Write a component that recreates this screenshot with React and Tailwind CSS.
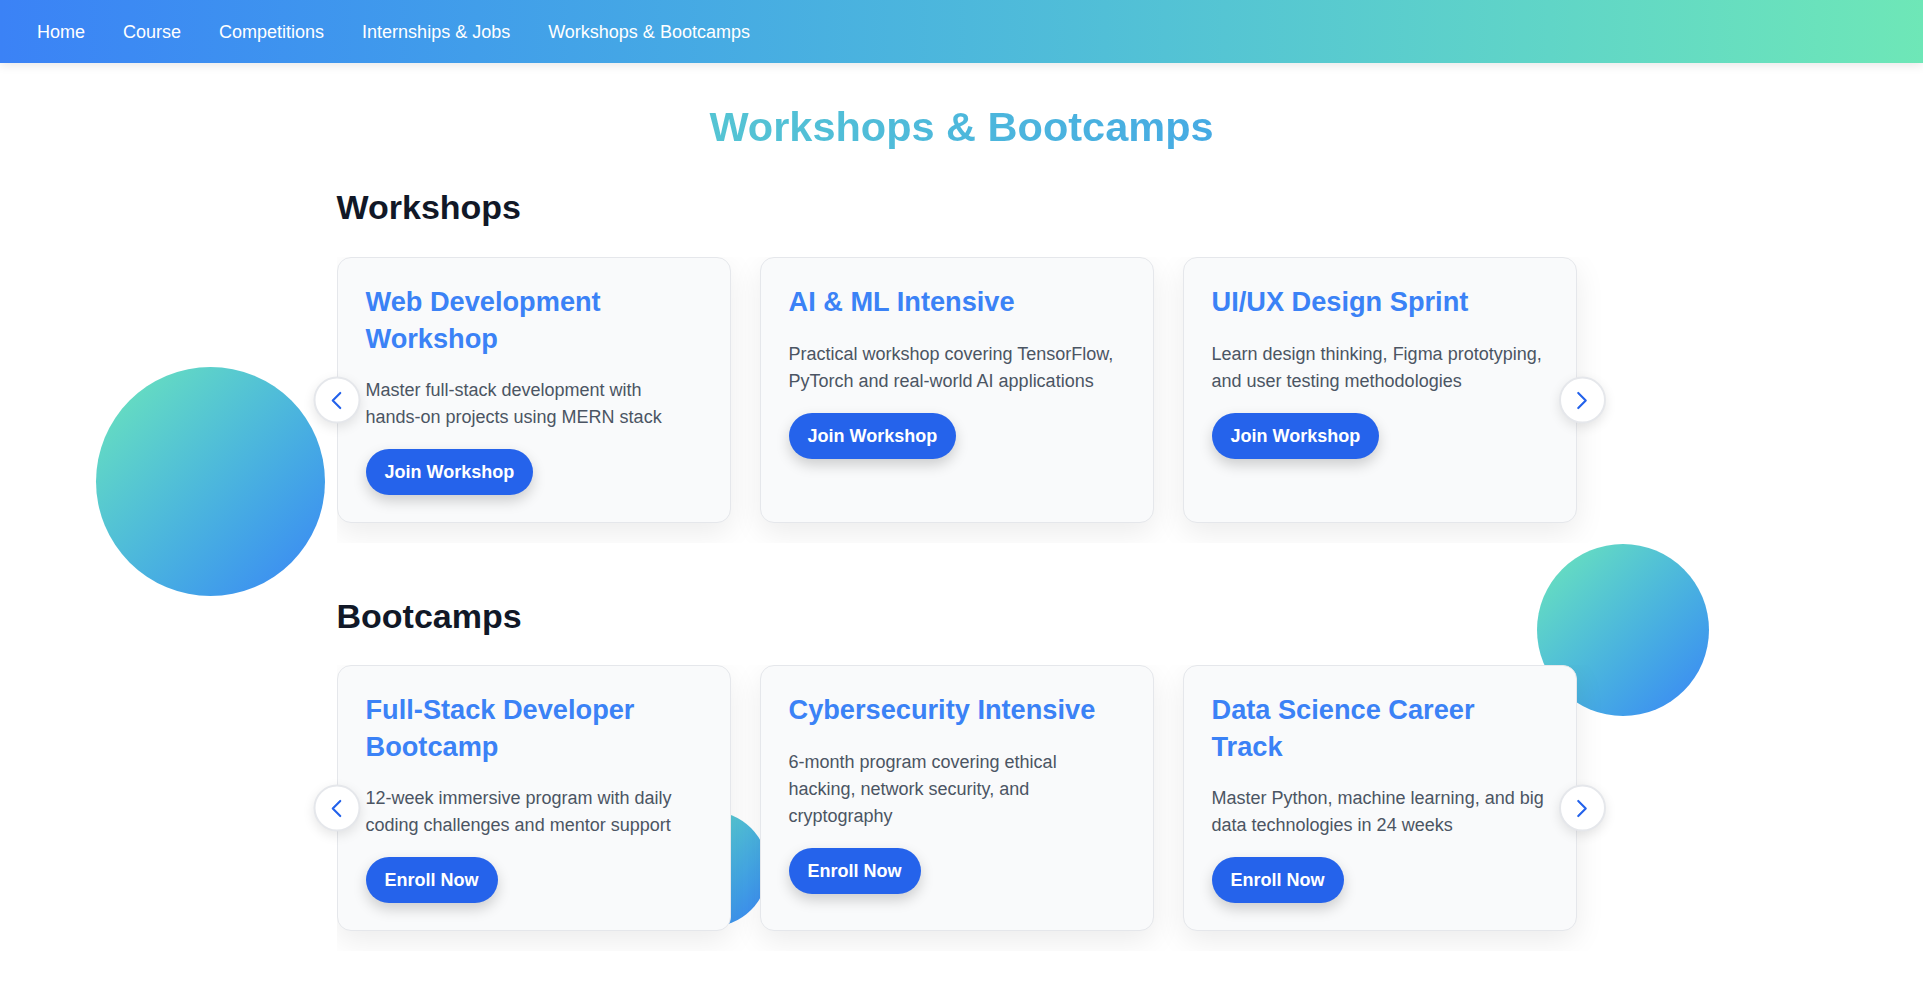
import React from 'react';
import { ChevronLeft, ChevronRight } from 'lucide-react';

const navLinks = ['Home', 'Course', 'Competitions', 'Internships & Jobs', 'Workshops & Bootcamps'];

const workshops = [
    {
        title: 'Web Development Workshop',
        text: 'Master full-stack development with hands-on projects using MERN stack',
    },
    {
        title: 'AI & ML Intensive',
        text: 'Practical workshop covering TensorFlow, PyTorch and real-world AI applications',
    },
    {
        title: 'UI/UX Design Sprint',
        text: 'Learn design thinking, Figma prototyping, and user testing methodologies',
    },
];

const bootcamps = [
    {
        title: 'Full-Stack Developer Bootcamp',
        text: '12-week immersive program with daily coding challenges and mentor support',
    },
    {
        title: 'Cybersecurity Intensive',
        text: '6-month program covering ethical hacking, network security, and cryptography',
    },
    {
        title: 'Data Science Career Track',
        text: 'Master Python, machine learning, and big data technologies in 24 weeks',
    },
];

const Card = ({ item, action }) => (
    <div className="shrink-0 w-[394px] mr-[29px] bg-[#f9fafb] border border-[#e5e7eb] rounded-[14px] shadow-[0_10px_30px_rgba(0,0,0,0.08)] pt-[26px] pb-[27px] px-[28px]">
        <h3 className="text-[27.2px] leading-[36.7px] font-bold text-[#3b82f6]">{item.title}</h3>
        <p className="mt-[20px] text-[18px] leading-[27px] text-[#4b5563]">{item.text}</p>
        <button className="mt-[18px] h-[46px] px-[19px] rounded-full bg-[#2563eb] text-white text-[18px] leading-[22px] font-bold shadow-[0_6px_14px_rgba(0,0,0,0.18)]">
            {action}
        </button>
    </div>
);

const Carousel = ({ items, action }) => (
    <div className="relative w-[1269px]">
        <div className="overflow-hidden pb-[20px]">
            <div className="flex items-stretch">
                {items.map((item) => (
                    <Card key={item.title} item={item} action={action} />
                ))}
            </div>
        </div>
        <button className="absolute left-0 top-1/2 -translate-x-1/2 -translate-y-1/2 w-[47px] h-[47px] rounded-full bg-white border-2 border-[#e5e7eb] shadow-[0_4px_12px_rgba(0,0,0,0.1)] flex items-center justify-center text-[#2563eb]">
            <ChevronLeft size={30} strokeWidth={1.7} />
        </button>
        <button className="absolute right-0 top-1/2 -translate-y-1/2 w-[47px] h-[47px] rounded-full bg-white border-2 border-[#e5e7eb] shadow-[0_4px_12px_rgba(0,0,0,0.1)] flex items-center justify-center text-[#2563eb]">
            <ChevronRight size={30} strokeWidth={1.7} />
        </button>
    </div>
);

export default function App() {
    return (
        <div className="relative min-h-screen overflow-hidden bg-white font-['Liberation_Sans',Arial,sans-serif]">
            {/* floating shapes */}
            <div className="absolute left-[96px] top-[367px] w-[229px] h-[229px] rounded-full bg-linear-to-br from-[#6ee7b7] to-[#3b82f6]"></div>
            <div className="absolute left-[1537px] top-[544px] w-[172px] h-[172px] rounded-full bg-linear-to-br from-[#6ee7b7] to-[#3b82f6]"></div>
            <div className="absolute left-[652px] top-[811px] w-[116px] h-[116px] rounded-full bg-linear-to-br from-[#6ee7b7] to-[#3b82f6]"></div>

            <nav className="relative z-20 h-[63px] bg-linear-to-r from-[#3b82f6] to-[#6ee7b7] shadow-[0_2px_10px_rgba(0,0,0,0.1)] flex items-center pl-[37px] gap-[38px]">
                {navLinks.map((link) => (
                    <a key={link} href="#" className="text-white text-[18px] leading-[22px]">
                        {link}
                    </a>
                ))}
            </nav>

            <main className="relative z-10 pt-[39px] pb-[14px]">
                <h1 className="text-center text-[41.5px] leading-[49px] font-bold bg-linear-to-r from-[#6ee7b7] to-[#3b82f6] bg-clip-text text-transparent">
                    Workshops &amp; Bootcamps
                </h1>

                <section className="w-[1250px] mx-auto mt-[36px]">
                    <h2 className="text-[34px] leading-[1.2] font-bold text-[#111827] mb-[29px]">Workshops</h2>
                    <Carousel items={workshops} action="Join Workshop" />
                </section>

                <section className="w-[1250px] mx-auto mt-[53px]">
                    <h2 className="text-[34px] leading-[1.2] font-bold text-[#111827] mb-[28px]">Bootcamps</h2>
                    <Carousel items={bootcamps} action="Enroll Now" />
                </section>
            </main>
        </div>
    );
}
